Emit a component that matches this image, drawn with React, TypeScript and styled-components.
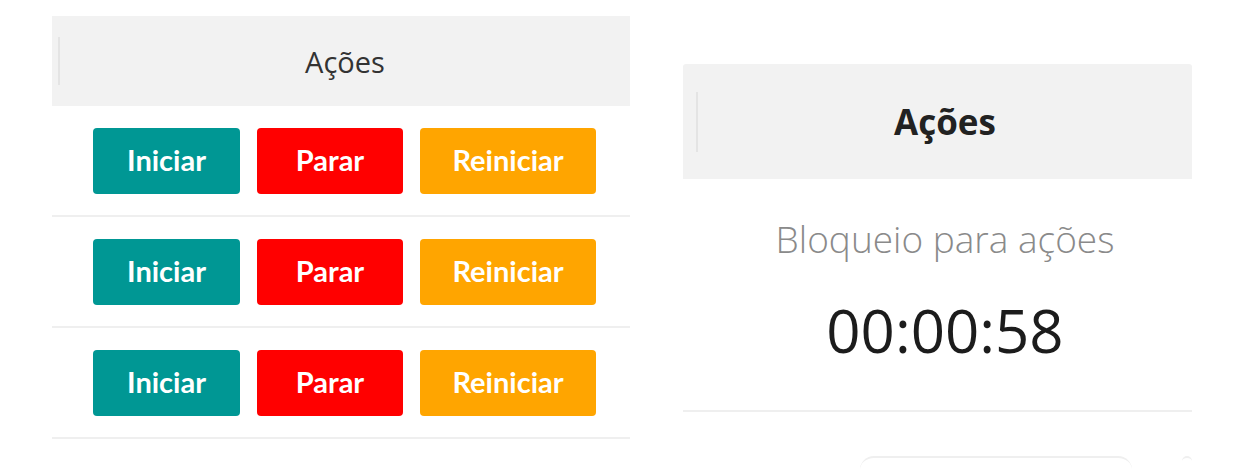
import React from "react";
import styled, { createGlobalStyle } from "styled-components";

const Global = createGlobalStyle`
  html, body { margin: 0; padding: 0; background: #ffffff; }
  body { font-family: "Open Sans", "Noto Sans", sans-serif; }
  #root { width: 1239px; height: 471px; overflow: hidden; }
`;

const Page = styled.div`
  display: flex;
  align-items: flex-start;
  gap: 53px;
  padding: 16px 0 0 52px;
  box-sizing: border-box;
`;

const LeftTable = styled.div`
  width: 578px;
  display: flex;
  flex-direction: column;
`;

const HeaderCell = styled.div<{ $h: number; $divH: number; $shift: number; $radius?: number }>`
  position: relative;
  height: ${(p) => p.$h}px;
  background: #f2f2f2;
  display: flex;
  align-items: center;
  justify-content: center;
  padding-left: ${(p) => p.$shift}px;
  border-radius: ${(p) => p.$radius ?? 0}px ${(p) => p.$radius ?? 0}px 0 0;
  &::before {
    content: "";
    position: absolute;
    left: ${(p) => (p.$shift > 10 ? 13 : 6)}px;
    top: 50%;
    transform: translateY(-50%);
    width: 2px;
    height: ${(p) => p.$divH}px;
    background: #e4e4e4;
  }
`;

const HeaderText = styled.span<{ $size: number; $bold?: boolean }>`
  font-family: "Open Sans", "Noto Sans", sans-serif;
  font-size: ${(p) => p.$size}px;
  font-weight: ${(p) => (p.$bold ? 700 : 400)};
  color: ${(p) => (p.$bold ? "#222" : "#333")};
  line-height: normal;
`;

const Row = styled.div`
  height: 109px;
  border-bottom: 2px solid #efefef;
  display: flex;
  align-items: center;
  justify-content: center;
  gap: 17px;
  padding-left: 7px;
`;

const Btn = styled.button<{ $bg: string; $w: number }>`
  width: ${(p) => p.$w}px;
  height: 66px;
  border: none;
  border-radius: 4px;
  background: ${(p) => p.$bg};
  color: #ffffff;
  font-family: Lato, "Open Sans", sans-serif;
  font-weight: 700;
  font-size: 29px;
  line-height: 1.2;
  padding: 0;
  display: flex;
  align-items: center;
  justify-content: center;
  cursor: pointer;
`;

const RightCol = styled.div`
  width: 509px;
  margin-top: 48px;
  display: flex;
  flex-direction: column;
`;

const Body = styled.div`
  display: flex;
  flex-direction: column;
  align-items: center;
  padding: 36px 0 39px 15px;
  border-bottom: 2px solid #efefef;
`;

const Label = styled.div`
  font-family: "Open Sans", "Noto Sans", sans-serif;
  font-size: 37px;
  font-weight: 300;
  color: #8a8a8a;
  line-height: 47px;
`;

const Timer = styled.div`
  margin-top: 27px;
  font-family: "Open Sans", "Noto Sans", sans-serif;
  font-size: 60px;
  font-weight: 400;
  color: #1c1c1c;
  line-height: normal;
`;

const Footer = styled.div`
  display: flex;
  gap: 50px;
  margin-top: 44px;
  padding-left: 177px;
`;

const Ghost = styled.div<{ $w: number }>`
  width: ${(p) => p.$w}px;
  height: 40px;
  border-top: 2px solid #efefef;
  border-radius: 14px 14px 0 0;
`;

const rows = [0, 1, 2];

export default function App() {
  return (
    <>
      <Global />
      <Page>
        <LeftTable>
          <HeaderCell $h={90} $divH={48} $shift={8}>
            <HeaderText $size={29}>Ações</HeaderText>
          </HeaderCell>
          {rows.map((r) => (
            <Row key={r}>
              <Btn $bg="#009794" $w={147}>Iniciar</Btn>
              <Btn $bg="#ff0000" $w={146}>Parar</Btn>
              <Btn $bg="#ffa500" $w={176}>Reiniciar</Btn>
            </Row>
          ))}
        </LeftTable>
        <RightCol>
          <HeaderCell $h={115} $divH={60} $shift={15} $radius={3}>
            <HeaderText $size={35} $bold>Ações</HeaderText>
          </HeaderCell>
          <Body>
            <Label>Bloqueio para ações</Label>
            <Timer>00:00:58</Timer>
          </Body>
          <Footer>
            <Ghost $w={287} />
            <Ghost $w={11} />
          </Footer>
        </RightCol>
      </Page>
    </>
  );
}
